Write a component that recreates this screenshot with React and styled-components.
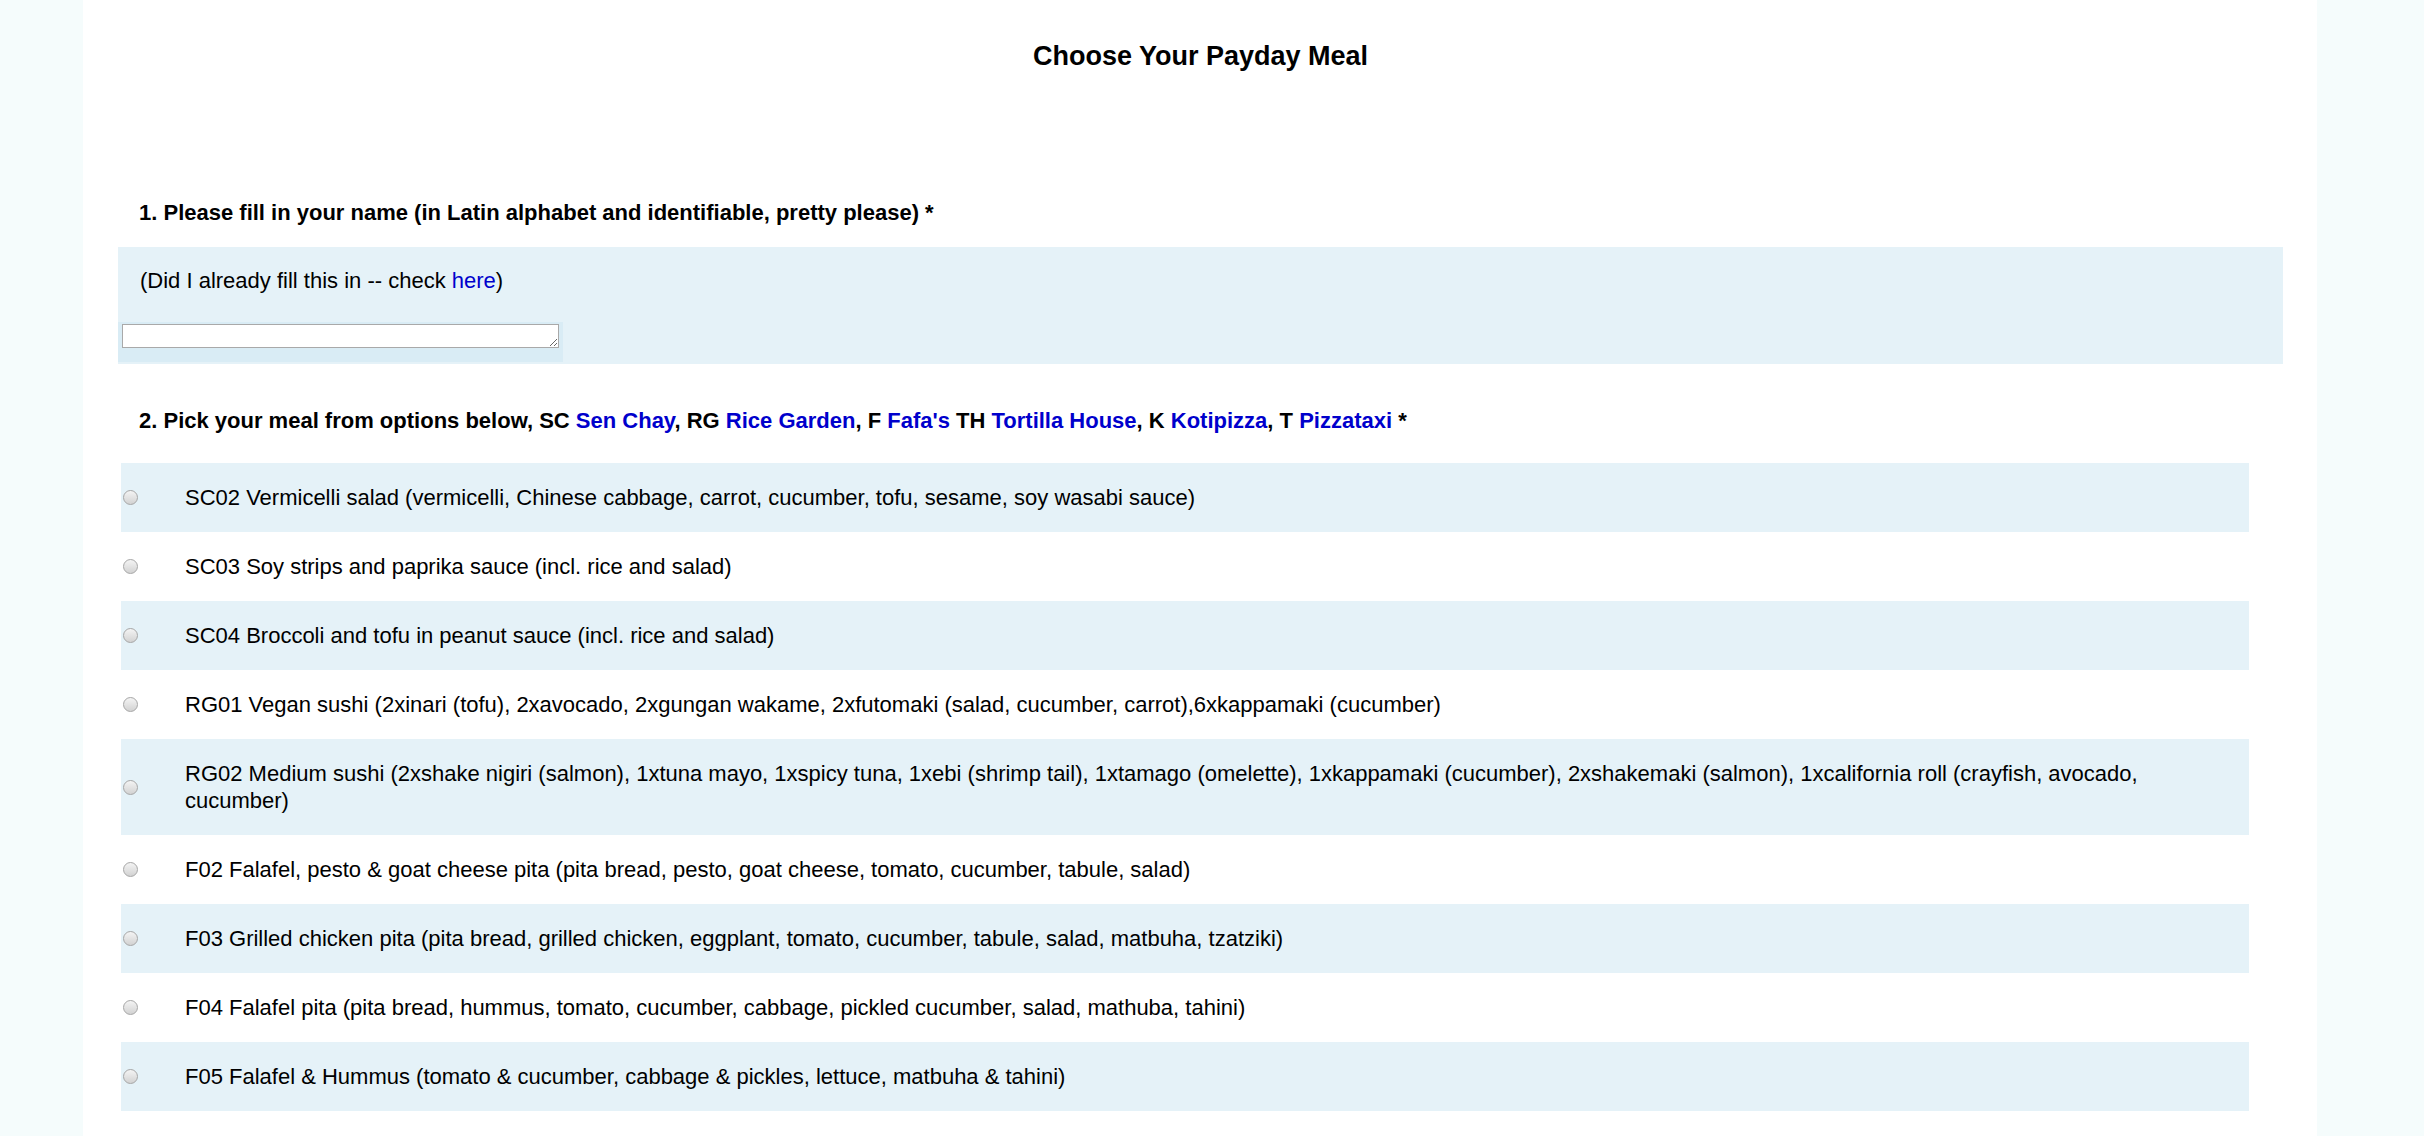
import React from "react";
import styled, { createGlobalStyle } from "styled-components";

const GlobalStyle = createGlobalStyle`
  html, body {
    margin: 0;
    padding: 0;
    background: #f5fcfc;
  }
  body {
    font-family: "Liberation Sans", Arial, sans-serif;
    color: #000;
  }
`;

const Page = styled.div`
  min-height: 100vh;
  background: #f5fcfc;
`;

const Container = styled.div`
  width: 2234px;
  min-height: 100vh;
  margin: 0 0 0 83px;
  background: #fff;
  padding: 40px 34px 40px 35px;
  box-sizing: border-box;
`;

const Title = styled.h1`
  margin: 0;
  font-size: 27px;
  line-height: 32px;
  font-weight: bold;
  text-align: center;
`;

const Question = styled.h2`
  margin: ${(p) => p.$top}px 0 ${(p) => p.$bottom}px;
  padding-left: 21px;
  font-size: 22px;
  line-height: 27px;
  font-weight: bold;
`;

const Link = styled.a`
  color: #0000cc;
  text-decoration: none;
`;

const HelpBox = styled.div`
  background: #e5f2f8;
  padding: 20px 0 2px;
`;

const HelpText = styled.p`
  margin: 0;
  padding-left: 22px;
  font-size: 22px;
  line-height: 27px;
`;

const InputWrap = styled.div`
  width: 445px;
  box-sizing: border-box;
  margin-top: 28px;
  padding: 2px 4px 14px;
  background: #d9ecf5;
`;

const NameInput = styled.textarea`
  display: block;
  width: 437px;
  height: 24px;
  box-sizing: border-box;
  margin: 0;
  border: 1px solid #a9a9a9;
  background: #fff;
  font-family: "Liberation Sans", Arial, sans-serif;
  font-size: 14px;
`;

const Options = styled.div`
  margin: 0 34px 0 3px;
`;

const Option = styled.label`
  display: grid;
  grid-template-columns: 62px 1fr;
  align-items: center;
  padding: 21px 24px 21px 2px;
  background: ${(p) => (p.$shaded ? "#e5f2f8" : "#fff")};
  font-size: 22px;
  line-height: 27px;
  cursor: pointer;
`;

const Radio = styled.input.attrs({ type: "radio" })`
  appearance: none;
  width: 15px;
  height: 15px;
  margin: 0;
  border-radius: 50%;
  border: 1px solid #a6a6a6;
  background: linear-gradient(#f4f4f4, #d2d2d2);
  box-sizing: border-box;
`;

const meals = [
  "SC02 Vermicelli salad (vermicelli, Chinese cabbage, carrot, cucumber, tofu, sesame, soy wasabi sauce)",
  "SC03 Soy strips and paprika sauce (incl. rice and salad)",
  "SC04 Broccoli and tofu in peanut sauce (incl. rice and salad)",
  "RG01 Vegan sushi (2xinari (tofu), 2xavocado, 2xgungan wakame, 2xfutomaki (salad, cucumber, carrot),6xkappamaki (cucumber)",
  "RG02 Medium sushi (2xshake nigiri (salmon), 1xtuna mayo, 1xspicy tuna, 1xebi (shrimp tail), 1xtamago (omelette), 1xkappamaki (cucumber), 2xshakemaki (salmon), 1xcalifornia roll (crayfish, avocado, cucumber)",
  "F02 Falafel, pesto & goat cheese pita (pita bread, pesto, goat cheese, tomato, cucumber, tabule, salad)",
  "F03 Grilled chicken pita (pita bread, grilled chicken, eggplant, tomato, cucumber, tabule, salad, matbuha, tzatziki)",
  "F04 Falafel pita (pita bread, hummus, tomato, cucumber, cabbage, pickled cucumber, salad, mathuba, tahini)",
  "F05 Falafel & Hummus (tomato & cucumber, cabbage & pickles, lettuce, matbuha & tahini)",
];

export default function App() {
  return (
    <Page>
      <GlobalStyle />
      <Container>
        <Title>Choose Your Payday Meal</Title>

        <Question $top={127} $bottom={21}>
          1. Please fill in your name (in Latin alphabet and identifiable, pretty please) *
        </Question>
        <HelpBox>
          <HelpText>
            (Did I already fill this in -- check <Link href="#">here</Link>)
          </HelpText>
          <InputWrap>
            <NameInput name="name" />
          </InputWrap>
        </HelpBox>

        <Question $top={43} $bottom={29}>
          2. Pick your meal from options below, SC <Link href="#">Sen Chay</Link>, RG{" "}
          <Link href="#">Rice Garden</Link>, F <Link href="#">Fafa's</Link> TH{" "}
          <Link href="#">Tortilla House</Link>, K <Link href="#">Kotipizza</Link>, T{" "}
          <Link href="#">Pizzataxi</Link> *
        </Question>
        <Options>
          {meals.map((meal, i) => (
            <Option key={meal} $shaded={i % 2 === 0}>
              <Radio name="meal" value={i} />
              <span>{meal}</span>
            </Option>
          ))}
        </Options>
      </Container>
    </Page>
  );
}
